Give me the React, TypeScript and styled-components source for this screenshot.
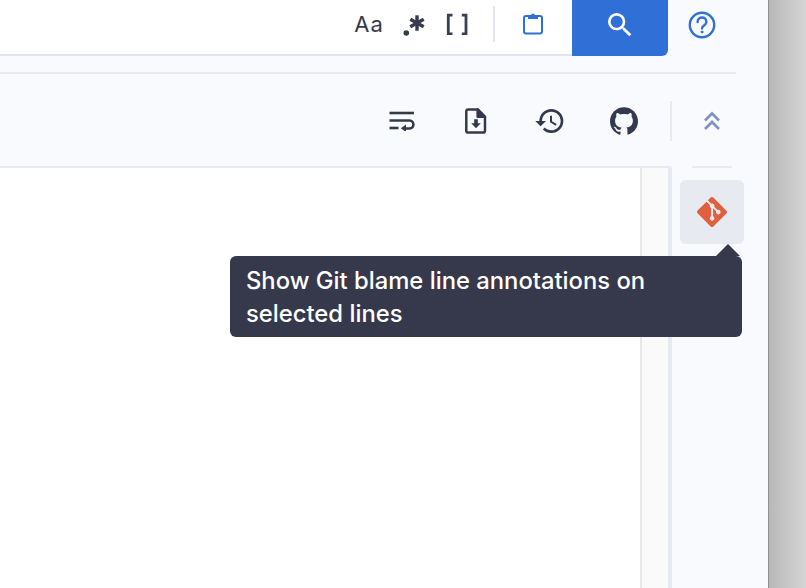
import React from "react";
import styled, { createGlobalStyle } from "styled-components";
import { MdSearch, MdHistory } from "react-icons/md";
import { SiGit, SiGithub } from "react-icons/si";

const Global = createGlobalStyle`
  html, body { margin: 0; padding: 0; overflow: hidden; background: #ccc; }
  * { box-sizing: border-box; }
`;
const Page = styled.div`
  width: 806px; height: 588px; display: flex; position: relative;
  font-family: Inter, "Liberation Sans", sans-serif; overflow: hidden;
`;
const Window = styled.div`
  width: 768px; height: 588px; background: #f9fafd; display: flex; flex-direction: column; flex: none;
`;
const Backdrop = styled.div`
  flex: 1; border-left: 1px solid #8e8e8e;
  background: linear-gradient(90deg, #b8b8b8 0, #d5d5d5 100%);
`;
const TopBar = styled.div`display: flex; height: 56px; flex: none; margin-right: 32px;`;
const FindBar = styled.div`
  flex: 1; background: #fff; border-bottom: 2px solid #dfe4f0; height: 56px;
  display: flex; justify-content: flex-end; align-items: center; padding-bottom: 6px;
`;
const Tool = styled.div<{ $w: number }>`
  width: ${p => p.$w}px; height: 48px; display: flex; align-items: center; justify-content: center;
  color: #373c4d;
`;
const CaseText = styled.span`font-size: 22px; letter-spacing: 1px; color: #343a4d; line-height: 1;`;
const TopDivider = styled.div`width: 2px; height: 36px; background: #e0e4ef; margin: 0 -1px 0 17px;`;
const SearchButton = styled.div`
  width: 96px; height: 56px; background: #306fd6; border-radius: 0 0 6px 0; color: #fff;
  display: flex; align-items: center; justify-content: center; padding-bottom: 6px;
`;
const HelpSlot = styled.div`
  width: 68px; display: flex; align-items: center; justify-content: center; padding-bottom: 6px;
`;
const Rule = styled.div`height: 2px; background: #e8eaf2; margin: 16px 32px 0 0; flex: none;`;
const Toolbar = styled.div`
  height: 92px; flex: none; display: flex; align-items: center; justify-content: flex-end;
  padding: 2px 16px 0 0;
`;
const ToolIcon = styled.div`
  width: 74px; height: 48px; display: flex; align-items: center; justify-content: center; color: #343a4d;
`;
const VDivider = styled.div`width: 2px; height: 40px; background: #e8eaf2; margin-left: 9px;`;
const Collapse = styled.div`
  width: 80px; height: 48px; display: flex; align-items: center; justify-content: center;
`;
const Body = styled.div`flex: 1; display: flex; min-height: 0; align-items: stretch;`;
const Editor = styled.div`
  width: 672px; flex: none; display: flex; border-top: 2px solid #e8eaf2; border-right: 4px solid #e8eaf2;
  border-top-right-radius: 3px;
`;
const Code = styled.div`width: 640px; background: #fff; border-right: 2px solid #e8e8ea; flex: none; box-sizing: content-box;`;
const Gutter = styled.div`flex: 1; background: #fafafa;`;
const Side = styled.div`width: 80px; flex: none; display: flex; flex-direction: column; align-items: center;`;
const SideRule = styled.div`width: 40px; height: 2px; background: #e8eaf2; flex: none;`;
const GitButton = styled.div`
  width: 64px; height: 64px; margin-top: 12px; background: #e8eaf2; border-radius: 6px; color: #e05f3f;
  display: flex; align-items: center; justify-content: center;
`;
const Tooltip = styled.div`
  position: absolute; left: 230px; top: 256px; width: 512px; height: 81px; padding: 8px 16px; background: #35394b;
  border-radius: 6px; color: #fff; font-size: 23.8px; font-weight: 450; line-height: 33px;
  &::before {
    content: ""; position: absolute; top: -12px; right: 2px; width: 0; height: 0;
    border-left: 12px solid transparent; border-right: 12px solid transparent; border-bottom: 12px solid #35394b;
  }
`;

const Regex = () => (
  <svg width="26" height="26" viewBox="0 0 26 26" fill="#373c4d">
    <circle cx="4.300" cy="22" r="2.800" />
    <g stroke="#373c4d" strokeWidth="3.400">
      <path d="M15 4.300v15.400" />
      <path d="M8.300 8.200l13.400 7.600" />
      <path d="M21.700 8.200l-13.400 7.600" />
    </g>
  </svg>
);
const Brackets = () => (
  <svg width="24" height="22" viewBox="0 0 24 22" fill="none" stroke="#3a3f52" strokeWidth="2.800">
    <path d="M7.500 2.200H3.300v18.600h4.200" />
    <path d="M16.800 2.200h4.200v18.600h-4.200" />
  </svg>
);
const Clipboard = () => (
  <svg width="22" height="24" viewBox="0 0 22 24" fill="none" stroke="#306fd6" strokeWidth="2" strokeLinejoin="round">
    <rect x="2" y="4" width="18" height="17.500" rx="2" />
    <path d="M6 7V3.500h3c.2-2.800 3.800-2.800 4 0h3V7z" fill="#306fd6" stroke="none" />
  </svg>
);
const Help = () => (
  <svg width="28" height="28" viewBox="0 0 28 28" fill="none" stroke="#306fd6" strokeWidth="2.400" strokeLinecap="round">
    <circle cx="14" cy="14" r="12.200" />
    <path d="M9.600 11c0-6 8.800-6 8.800 0 0 3.600-4.400 3.400-4.400 6.400" />
    <circle cx="14" cy="21" r="1" fill="#306fd6" strokeWidth="1" />
  </svg>
);
const Wrap = () => (
  <svg width="26" height="20" viewBox="0 0 26 20" fill="none" stroke="#343a4d" strokeWidth="2.600">
    <path d="M0.500 2h24.500" />
    <path d="M0.500 9.500h20c5.200 0 5.200 8 0 8H15" />
    <path d="M0.500 17h9" />
    <path d="M17 13.600v7.400L11.800 17.300z" fill="#343a4d" stroke="none" />
  </svg>
);
const FileDown = () => (
  <svg width="22" height="26" viewBox="0 0 24 28" fill="none" stroke="#343a4d" strokeWidth="2.700" strokeLinejoin="round">
    <path d="M3.400 1.400h10.400l8 8v15.200a2 2 0 0 1-2 2H3.400a2 2 0 0 1-2-2V3.400a2 2 0 0 1 2-2z" />
    <path d="M13.800 1.400v8h8z" fill="#343a4d" />
    <path d="M10 12h4v4.500h3.200L12 22l-5.200-5.500H10z" fill="#343a4d" stroke="none" />
  </svg>
);
const ChevronsUp = () => (
  <svg width="18" height="20" viewBox="0 0 18 20" fill="none" stroke="#8094bd" strokeWidth="2.700">
    <path d="M2 9.500l7-7 7 7" />
    <path d="M2 18l7-7 7 7" />
  </svg>
);

export default function App() {
  return (
    <Page>
      <Global />
      <Window>
        <TopBar>
          <FindBar>
            <Tool $w={46}><CaseText>Aa</CaseText></Tool>
            <Tool $w={46}><Regex /></Tool>
            <Tool $w={38}><Brackets /></Tool>
            <TopDivider />
            <Tool $w={78}><Clipboard /></Tool>
          </FindBar>
          <SearchButton><MdSearch size={32} /></SearchButton>
          <HelpSlot><Help /></HelpSlot>
        </TopBar>
        <Rule />
        <Toolbar>
          <ToolIcon><Wrap /></ToolIcon>
          <ToolIcon><FileDown /></ToolIcon>
          <ToolIcon><MdHistory size={32} /></ToolIcon>
          <ToolIcon><SiGithub size={28} /></ToolIcon>
          <VDivider />
          <Collapse><ChevronsUp /></Collapse>
        </Toolbar>
        <Body>
          <Editor>
            <Code />
            <Gutter />
          </Editor>
          <Side>
            <SideRule />
            <GitButton><SiGit size={30} /></GitButton>
          </Side>
        </Body>
      </Window>
      <Backdrop />
      <Tooltip>Show Git blame line annotations on selected lines</Tooltip>
    </Page>
  );
}
